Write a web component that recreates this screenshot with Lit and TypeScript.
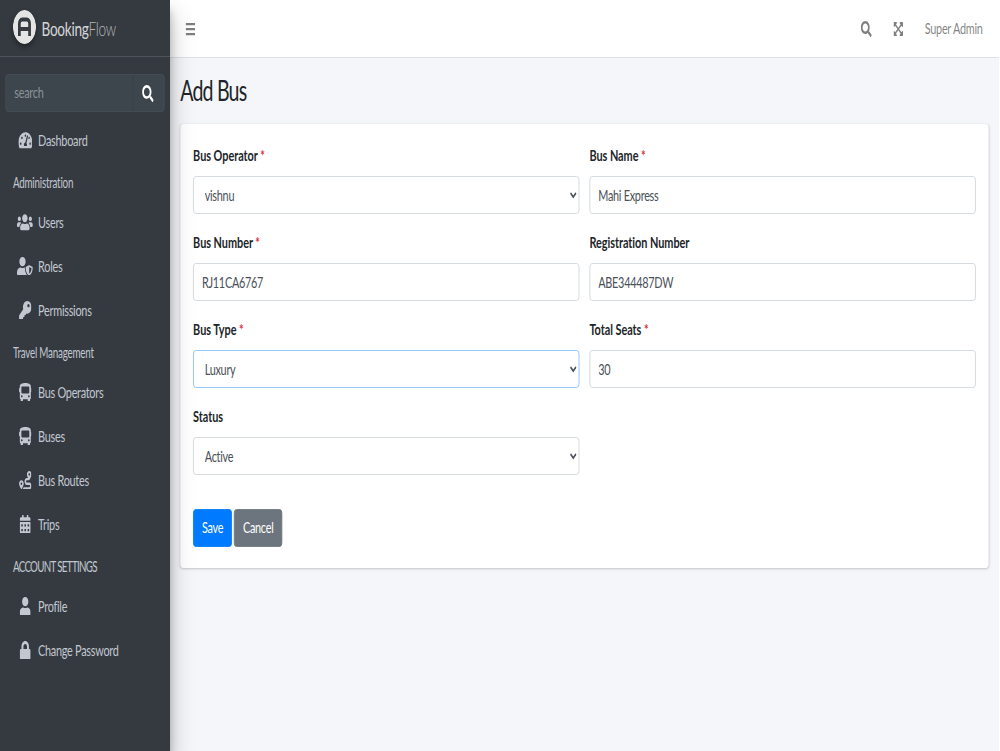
import { LitElement, html, css, svg } from "lit";
import { customElement } from "lit/decorators.js";

const P: Record<string, [number, string]> = {
  search: [512, "M505 442.7L405.3 343c-4.5-4.5-10.6-7-17-7H372c27.6-35.3 44-79.7 44-128C416 93.1 322.9 0 208 0S0 93.1 0 208s93.1 208 208 208c48.3 0 92.7-16.4 128-44v16.3c0 6.4 2.5 12.5 7 17l99.7 99.7c9.4 9.4 24.6 9.4 33.9 0l28.3-28.3c9.4-9.4 9.4-24.6.1-34zM208 336c-70.7 0-128-57.2-128-128 0-70.7 57.2-128 128-128 70.7 0 128 57.2 128 128 0 70.7-57.2 128-128 128z"],
  bars: [448, "M16 132h416c8.837 0 16-7.163 16-16V76c0-8.837-7.163-16-16-16H16C7.163 60 0 67.163 0 76v40c0 8.837 7.163 16 16 16zm0 160h416c8.837 0 16-7.163 16-16v-40c0-8.837-7.163-16-16-16H16c-8.837 0-16 7.163-16 16v40c0 8.837 7.163 16 16 16zm0 160h416c8.837 0 16-7.163 16-16v-40c0-8.837-7.163-16-16-16H16c-8.837 0-16 7.163-16 16v40c0 8.837 7.163 16 16 16z"],
  user: [448, "M224 256c70.7 0 128-57.3 128-128S294.7 0 224 0 96 57.3 96 128s57.3 128 128 128zm89.6 32h-16.7c-22.2 10.2-46.9 16-72.9 16s-50.6-5.8-72.9-16h-16.7C60.2 288 0 348.2 0 422.4V464c0 26.5 21.5 48 48 48h352c26.5 0 48-21.5 48-48v-41.6c0-74.2-60.2-134.4-134.4-134.4z"],
  lock: [448, "M400 224h-24v-72C376 68.2 307.8 0 224 0S72 68.2 72 152v72H48c-26.5 0-48 21.5-48 48v192c0 26.5 21.5 48 48 48h352c26.5 0 48-21.5 48-48V272c0-26.5-21.5-48-48-48zm-104 0H152v-72c0-39.7 32.3-72 72-72s72 32.3 72 72v72z"],
  users: [640, "M96 224c35.3 0 64-28.7 64-64s-28.7-64-64-64-64 28.7-64 64 28.7 64 64 64zm448 0c35.3 0 64-28.7 64-64s-28.7-64-64-64-64 28.7-64 64 28.7 64 64 64zm32 32h-64c-17.6 0-33.5 7.1-45.1 18.6 40.3 22.1 68.9 62 75.1 109.4h66c17.7 0 32-14.3 32-32v-32c0-35.3-28.7-64-64-64zm-256 0c61.9 0 112-50.1 112-112S381.9 32 320 32 208 82.1 208 144s50.1 112 112 112zm76.8 32h-8.3c-20.8 10-43.9 16-68.5 16s-47.6-6-68.5-16h-8.3C179.6 288 128 339.6 128 403.2V432c0 26.5 21.5 48 48 48h288c26.5 0 48-21.5 48-48v-28.8c0-63.6-51.6-115.2-115.2-115.2zm-223.7-13.4C161.5 263.1 145.6 256 128 256H64c-35.3 0-64 28.7-64 64v32c0 17.7 14.3 32 32 32h65.9c6.3-47.4 34.9-87.3 75.2-109.4z"],
  bus: [512, "M488 128h-8V80c0-44.8-99.2-80-224-80S32 35.2 32 80v48h-8c-13.25 0-24 10.74-24 24v80c0 13.25 10.75 24 24 24h8v160c0 17.67 14.33 32 32 32v32c0 17.67 14.33 32 32 32h32c17.67 0 32-14.33 32-32v-32h192v32c0 17.67 14.33 32 32 32h32c17.67 0 32-14.33 32-32v-32h6.4c16 0 25.6-12.8 25.6-25.6V256h8c13.25 0 24-10.75 24-24v-80c0-13.26-10.75-24-24-24zM112 400c-17.67 0-32-14.33-32-32s14.33-32 32-32 32 14.33 32 32-14.33 32-32 32zm16-112c-17.67 0-32-14.33-32-32V128c0-17.67 14.33-32 32-32h256c17.67 0 32 14.33 32 32v128c0 17.67-14.33 32-32 32H128zm272 112c-17.67 0-32-14.33-32-32s14.33-32 32-32 32 14.33 32 32-14.33 32-32 32z"],
  tach: [576, "M288 32C128.94 32 0 160.94 0 320c0 52.8 14.25 102.26 39.06 144.8 5.61 9.62 16.3 15.2 27.44 15.2h443c11.14 0 21.83-5.58 27.44-15.2C561.75 422.26 576 372.8 576 320c0-159.06-128.94-288-288-288zm0 64c14.71 0 26.58 10.13 30.32 23.65-1.11 2.26-2.64 4.23-3.45 6.67l-9.22 27.67c-5.13 3.49-10.97 6.01-17.64 6.01-17.67 0-32-14.33-32-32S270.33 96 288 96zM96 384c-17.67 0-32-14.33-32-32s14.33-32 32-32 32 14.33 32 32-14.33 32-32 32zm48-160c-17.67 0-32-14.33-32-32s14.33-32 32-32 32 14.33 32 32-14.33 32-32 32zm246.77-72.41l-61.33 184C343.13 347.33 352 364.54 352 384c0 11.72-3.38 22.55-8.88 32H232.88c-5.5-9.45-8.88-20.28-8.88-32 0-33.94 26.5-61.43 59.9-63.59l61.34-184.01c4.17-12.56 17.73-19.45 30.36-15.17 12.57 4.19 19.35 17.79 15.17 30.36zm14.66 57.2l15.52-46.55c3.47-1.29 7.13-2.23 11.05-2.23 17.67 0 32 14.33 32 32s-14.33 32-32 32c-11.38-.01-20.89-6.28-26.57-15.22zM480 384c-17.67 0-32-14.33-32-32s14.33-32 32-32 32 14.33 32 32-14.33 32-32 32z"],
  shield: [640, "M622.3 271.1l-115.2-45c-4.1-1.6-12.6-3.7-22.2 0l-115.2 45c-10.7 4.2-17.7 14-17.7 24.9 0 111.6 68.7 188.8 132.9 213.9 9.6 3.7 18 1.6 22.2 0C558.4 489.9 640 420.5 640 296c0-10.9-7-20.7-17.7-24.9zM496 462.4V273.3l95.5 37.3c-5.6 87.1-60.9 135.4-95.5 151.8zM224 256c70.7 0 128-57.3 128-128S294.7 0 224 0 96 57.3 96 128s57.3 128 128 128zm96 40c0-2.5.8-4.8 1.1-7.2-2.5-.1-4.9-.8-7.5-.8h-16.7c-22.2 10.2-46.9 16-72.9 16s-50.6-5.8-72.9-16h-16.7C60.2 288 0 348.2 0 422.4V464c0 26.5 21.5 48 48 48h352c6.8 0 13.3-1.5 19.2-4-54-42.9-99.2-116.7-99.2-212z"],
  key: [512, "M512 176.001C512 273.203 433.202 352 336 352c-11.22 0-22.19-1.062-32.827-3.069l-24.012 27.014A23.999 23.999 0 0 1 261.223 384H224v40c0 13.255-10.745 24-24 24h-40v40c0 13.255-10.745 24-24 24H24c-13.255 0-24-10.745-24-24v-78.059c0-6.365 2.529-12.47 7.029-16.971l161.802-161.802C163.108 213.814 160 195.271 160 176 160 78.798 238.797.001 335.999 0 433.488-.001 512 78.511 512 176.001zM336 128c0 26.51 21.49 48 48 48s48-21.49 48-48-21.49-48-48-48-48 21.49-48 48z"],
  route: [512, "M416 320h-96c-17.6 0-32-14.4-32-32s14.4-32 32-32h96s96-107 96-160-43-96-96-96-96 43-96 96c0 25.5 22.2 63.4 45.3 96H320c-52.9 0-96 43.1-96 96s43.1 96 96 96h96c17.6 0 32 14.4 32 32s-14.4 32-32 32H185.5c-16 24.8-33.8 47.7-47.3 64H416c52.9 0 96-43.1 96-96s-43.1-96-96-96zm0-256c17.7 0 32 14.3 32 32s-14.3 32-32 32-32-14.3-32-32 14.3-32 32-32zM96 256c-53 0-96 43-96 96s96 160 96 160 96-107 96-160-43-96-96-96zm0 128c-17.7 0-32-14.3-32-32s14.3-32 32-32 32 14.3 32 32-14.3 32-32 32z"],
  cal: [448, "M0 464c0 26.5 21.5 48 48 48h352c26.5 0 48-21.5 48-48V192H0v272zm320-196c0-6.6 5.4-12 12-12h40c6.6 0 12 5.4 12 12v40c0 6.6-5.4 12-12 12h-40c-6.6 0-12-5.4-12-12v-40zm0 128c0-6.6 5.4-12 12-12h40c6.6 0 12 5.4 12 12v40c0 6.6-5.4 12-12 12h-40c-6.6 0-12-5.4-12-12v-40zM192 268c0-6.6 5.4-12 12-12h40c6.6 0 12 5.4 12 12v40c0 6.6-5.4 12-12 12h-40c-6.6 0-12-5.4-12-12v-40zm0 128c0-6.6 5.4-12 12-12h40c6.6 0 12 5.4 12 12v40c0 6.6-5.4 12-12 12h-40c-6.6 0-12-5.4-12-12v-40zM64 268c0-6.6 5.4-12 12-12h40c6.6 0 12 5.4 12 12v40c0 6.6-5.4 12-12 12H76c-6.6 0-12-5.4-12-12v-40zm0 128c0-6.6 5.4-12 12-12h40c6.6 0 12 5.4 12 12v40c0 6.6-5.4 12-12 12H76c-6.6 0-12-5.4-12-12v-40zM400 64h-48V16c0-8.8-7.2-16-16-16h-32c-8.8 0-16 7.2-16 16v48H160V16c0-8.8-7.2-16-16-16h-32c-8.8 0-16 7.2-16 16v48H48C21.5 64 0 85.5 0 112v48h448v-48c0-26.5-21.5-48-48-48z"],
  expand: [448, "M448 344v112a23.94 23.94 0 0 1-24 24H312c-21.39 0-32.09-25.9-17-41l36.2-36.2L224 295.6 116.77 402.9 153 439c15.09 15.1 4.39 41-17 41H24a23.94 23.94 0 0 1-24-24V344c0-21.4 25.89-32.1 41-17l36.19 36.2L184.46 256 77.18 148.7 41 185c-15.1 15.1-41 4.4-41-17V56a23.94 23.94 0 0 1 24-24h112c21.39 0 32.09 25.9 17 41l-36.2 36.2L224 216.4l107.23-107.3L295 73c-15.09-15.1-4.39-41 17-41h112a23.94 23.94 0 0 1 24 24v112c0 21.4-25.89 32.1-41 17l-36.19-36.2L263.54 256l107.28 107.3L407 327.1c15.1-15.2 41-4.5 41 16.9z"],
};

function icon(name: string, size = 16) {
  const [w, d] = P[name];
  return html`<svg class="ic" viewBox="0 0 ${w} 512" height=${size} width=${(size * w) / 512}>${svg`<path fill="currentColor" fill-rule="evenodd" d=${d}></path>`}</svg>`;
}

type Row = { h?: string; caps?: boolean; i?: string; t?: string };
const NAV: Row[] = [
  { i: "tach", t: "Dashboard" },
  { h: "Administration" },
  { i: "users", t: "Users" },
  { i: "shield", t: "Roles" },
  { i: "key", t: "Permissions" },
  { h: "Travel Management" },
  { i: "bus", t: "Bus Operators" },
  { i: "bus", t: "Buses" },
  { i: "route", t: "Bus Routes" },
  { i: "cal", t: "Trips" },
  { h: "ACCOUNT SETTINGS", caps: true },
  { i: "user", t: "Profile" },
  { i: "lock", t: "Change Password" },
];

@customElement("app-root")
export class AppRoot extends LitElement {
  static styles = css`
    :host {
      display: block;
      width: 1000px;
      height: 751px;
      overflow: hidden;
      background: #fff;
    }
    * { box-sizing: border-box; }
    .stage {
      width: 1468.5px;
      height: 751px;
      transform: scaleX(0.68);
      transform-origin: 0 0;
      font-family: "Lato", "Liberation Sans", sans-serif;
      font-size: 16px;
      line-height: 24px;
      letter-spacing: -0.4px;
      color: #212529;
      background: #f4f6f9;
      display: flex;
    }
    .ic { display: block; flex: none; }
    .side {
      width: 250px;
      flex: none;
      background: #343a40;
      color: #c2c7d0;
      box-shadow: 0 14px 28px rgba(0,0,0,.25), 0 10px 10px rgba(0,0,0,.22);
      position: relative;
      z-index: 2;
    }
    .brand {
      height: 57px;
      display: flex;
      align-items: center;
      gap: 8px;
      padding-left: 19px;
      border-bottom: 1px solid #4b545c;
      font-size: 20px;
      color: rgba(255,255,255,.8);
    }
    .logo { flex: none; border-radius: 50%; box-shadow: 0 3px 6px rgba(0,0,0,.35); display: block; margin-top: -3px; }
    .brand .light { font-weight: 300; opacity: .8; }
    .sb { padding: 0 8px; }
    .search {
      display: flex;
      height: 38px;
      margin: 17px 0 8px;
      background: #3c464c;
      border: 1px solid #454f56;
      border-radius: 4px;
    }
    .search .ph { flex: 1; padding: 5px 12px 7px; color: #8b9299; }
    .search .btn {
      width: 46px;
      display: flex;
      align-items: center;
      justify-content: center;
      color: #fff;
      border-left: 1px solid #353d44;
      padding-right: 3px;
    }
    .navitem {
      display: flex;
      align-items: center;
      height: 40px;
      margin-bottom: 4px;
      padding-left: 10px;
    }
    .navitem .slot { width: 38px; display: flex; justify-content: center; }
    .navhead {
      height: 24px;
      padding-left: 11px;
      margin: 11px 0 7px;
      font-size: 14.4px;
      letter-spacing: -0.3px;
    }
    .navhead.caps { letter-spacing: -1px; }
    .main { flex: 1; min-width: 0; display: flex; flex-direction: column; }
    .top {
      height: 58px;
      flex: none;
      background: #fff;
      border-bottom: 1px solid #dee2e6;
      display: flex;
      align-items: center;
      padding: 0 23.5px 0 23px;
      color: rgba(0,0,0,.5);
    }
    .top .grow { flex: 1; }
    .top .admin { margin-left: 32px; margin-bottom: 2px; }
    .top .ex { margin-left: 32px; }
    .content { padding: 14px 15px 0 15px; }
    h1 {
      margin: 0 0 16px;
      font-size: 28.8px;
      line-height: 36px;
      font-weight: 400;
      height: 36px;
      letter-spacing: -1.2px;
    }
    .card {
      background: #fff;
      border-radius: 4px;
      box-shadow: 0 0 1px rgba(0,0,0,.125), 0 1px 3px rgba(0,0,0,.2);
      padding: 20px 19px;
      height: 444px;
    }
    .grid { display: grid; grid-template-columns: 1fr 1fr; column-gap: 15px; row-gap: 16.6px; }
    label { display: block; font-weight: 700; margin-bottom: 8px; height: 24px; line-height: 22px; letter-spacing: -0.05px; }
    label em { color: #dc3545; font-style: normal; font-weight: 700; }
    select, input {
      display: block;
      width: 100%;
      height: 38.4px;
      padding: 5px 12px 7px;
      font: inherit;
      letter-spacing: inherit;
      color: #495057;
      background: #fff;
      border: 1px solid #ced4da;
      border-radius: 4px;
      outline: none;
    }
    .focus { border-color: #80bdff; }
    .actions { display: flex; gap: 3px; margin-top: 33.6px; }
    .b {
      height: 38px;
      padding: 0 12px 2px;
      border-radius: 4px;
      display: flex;
      align-items: center;
      color: #fff;
      font: inherit;
      letter-spacing: inherit;
      border: 1px solid transparent;
    }
    .save { background: #007bff; border-color: #007bff; }
    .cancel { background: #6c757d; border-color: #6c757d; }
  `;

  private sel(label: string, req: boolean, opts: string[], focus = false) {
    return html`<div>
      <label>${label}${req ? html` <em>*</em>` : ""}</label>
      <select class=${focus ? "focus" : ""}>${opts.map((o) => html`<option>${o}</option>`)}</select>
    </div>`;
  }
  private inp(label: string, req: boolean, v: string) {
    return html`<div>
      <label>${label}${req ? html` <em>*</em>` : ""}</label>
      <input .value=${v} />
    </div>`;
  }

  render() {
    return html`<div class="stage">
      <aside class="side">
        <div class="brand">
          <svg class="logo" width="34" height="34" viewBox="0 0 34 34">
            <circle cx="17" cy="17" r="17" fill="#e4e4e4"></circle>
            <path d="M9.5 26V13.5a4 4 0 0 1 4-4h7a4 4 0 0 1 4 4V26M9.5 19h15" fill="none" stroke="#343a40" stroke-width="4"></path>
          </svg>
          <span>Booking<span class="light">Flow</span></span>
        </div>
        <div class="sb">
          <div class="search">
            <div class="ph">search</div>
            <div class="btn">${icon("search", 17)}</div>
          </div>
          ${NAV.map((n) =>
            n.h
              ? html`<div class="navhead ${n.caps ? "caps" : ""}">${n.h}</div>`
              : html`<div class="navitem"><span class="slot">${icon(n.i!, 18.5)}</span><span>${n.t}</span></div>`
          )}
        </div>
      </aside>
      <div class="main">
        <header class="top">
          ${icon("bars", 16)}
          <div class="grow"></div>
          ${icon("search", 16)}
          <span class="ex">${icon("expand", 16)}</span>
          <span class="admin">Super Admin</span>
        </header>
        <div class="content">
          <h1>Add Bus</h1>
          <div class="card">
            <div class="grid">
              ${this.sel("Bus Operator", true, ["vishnu"])}
              ${this.inp("Bus Name", true, "Mahi Express")}
              ${this.inp("Bus Number", true, "RJ11CA6767")}
              ${this.inp("Registration Number", false, "ABE344487DW")}
              ${this.sel("Bus Type", true, ["Luxury"], true)}
              ${this.inp("Total Seats", true, "30")}
              ${this.sel("Status", false, ["Active"])}
            </div>
            <div class="actions">
              <button class="b save">Save</button>
              <button class="b cancel">Cancel</button>
            </div>
          </div>
        </div>
      </div>
    </div>`;
  }
}
